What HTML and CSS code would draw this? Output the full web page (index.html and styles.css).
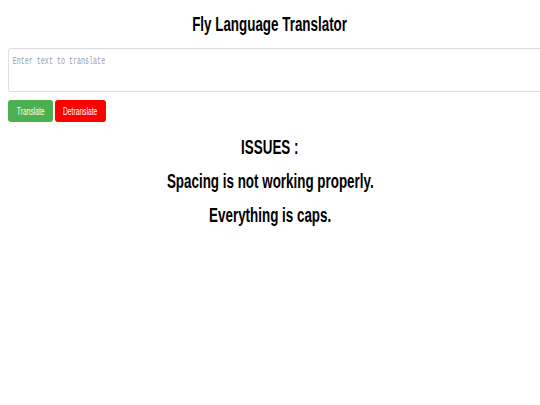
FILE: index.html
```html
<!DOCTYPE html>
<html>
<head>
<meta charset="utf-8">
<title>Fly Language Translator</title>
<link rel="stylesheet" href="styles.css">
</head>
<body>
<div class="page">
  <h1 class="heading"><span class="squeeze">Fly Language Translator</span></h1>
  <div class="input-wrap">
    <textarea class="input" placeholder="Enter text to translate"></textarea>
  </div>
  <div class="actions">
    <button class="btn btn-translate"><span class="btn-label">Translate</span></button>
    <button class="btn btn-detranslate"><span class="btn-label">Detranslate</span></button>
  </div>
  <div class="issues">
    <h2 class="heading"><span class="squeeze">ISSUES :</span></h2>
    <h2 class="heading"><span class="squeeze">Spacing is not working properly.</span></h2>
    <h2 class="heading"><span class="squeeze">Everything is caps.</span></h2>
  </div>
</div>
</body>
</html>
```
FILE: styles.css
```css
html, body {
  margin: 0;
  padding: 0;
  background: #ffffff;
  overflow: hidden;
}
.page {
  padding-top: 13px;
  font-family: "Liberation Sans", Arial, sans-serif;
  color: #000;
}
.heading {
  margin: 0;
  font-size: 20px;
  line-height: 23px;
  font-weight: bold;
  text-align: center;
  white-space: nowrap;
}
.squeeze {
  display: inline-block;
  transform: scaleX(0.67);
}
.input-wrap {
  margin-top: 12px;
  padding-left: 8px;
  height: 44px;
}
.input {
  display: block;
  box-sizing: border-box;
  width: 840px;
  height: 44px;
  margin: 0;
  padding: 7px 6px;
  border: 1px solid #d4d4d4;
  border-radius: 4px;
  font-family: "Liberation Mono", "DejaVu Sans Mono", monospace;
  font-size: 10px;
  letter-spacing: 0;
  resize: none;
  outline: none;
  background: #fff;
  transform: scaleX(0.67);
  transform-origin: 0 0;
}
.input::placeholder {
  color: #9c9c9c;
}
.actions {
  display: flex;
  gap: 2px;
  margin-top: 8px;
  padding-left: 8px;
}
.btn {
  height: 22px;
  padding: 0;
  border: none;
  border-radius: 3px;
  color: #fff;
  font-family: "Liberation Sans", Arial, sans-serif;
  font-size: 11px;
  display: flex;
  align-items: center;
  justify-content: center;
}
.btn-label {
  display: inline-block;
  transform: scaleX(0.61);
  white-space: nowrap;
}
.btn-translate {
  width: 45px;
  background: #4caf50;
}
.btn-detranslate {
  width: 51px;
  background: #ff0000;
}
.issues {
  margin-top: 14px;
  display: flex;
  flex-direction: column;
  gap: 11px;
}
```
